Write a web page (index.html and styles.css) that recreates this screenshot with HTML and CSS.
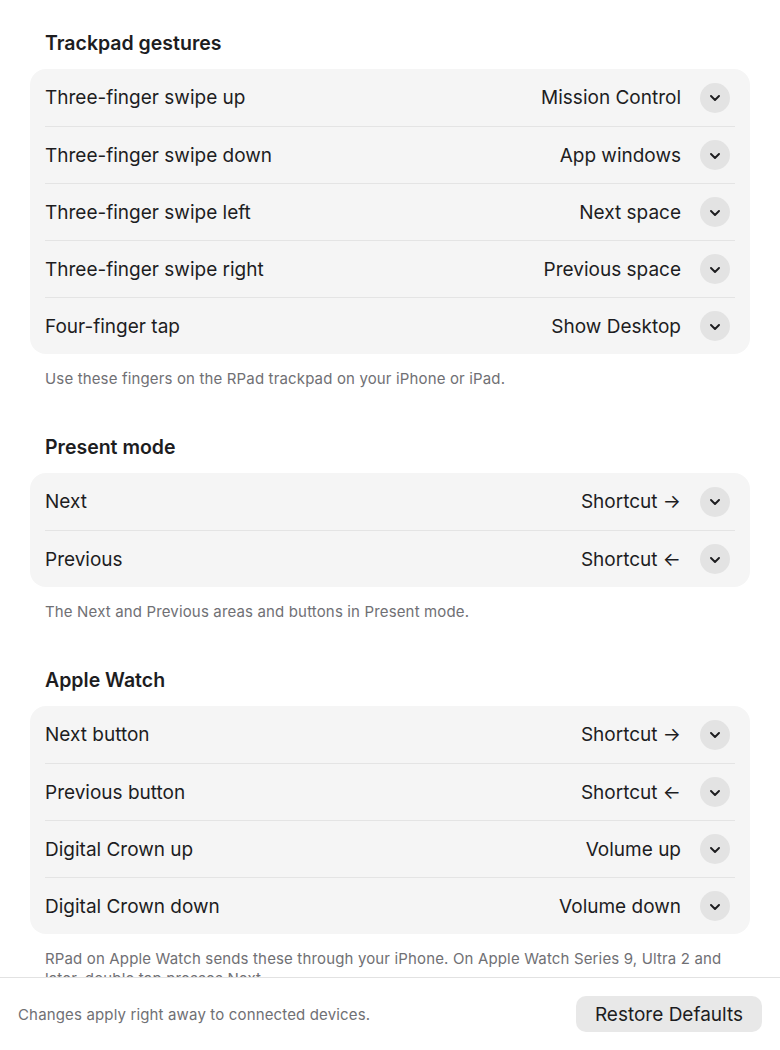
FILE: index.html
```html
<!DOCTYPE html>
<html lang="en">
<head>
<meta charset="utf-8">
<title>RPad settings</title>
<link rel="stylesheet" href="styles.css">
</head>
<body>
<div class="page">
  <main class="scroll">
    <section class="group">
      <h2 class="group-title">Trackpad gestures</h2>
      <div class="card">
        <div class="row"><span class="label">Three-finger swipe up</span><span class="value">Mission Control</span><span class="pop"><svg viewBox="0 0 10 6" width="10" height="6"><path d="M1 1 L5 5 L9 1" fill="none" stroke="#1d1d1f" stroke-width="1.9" stroke-linecap="round" stroke-linejoin="round"/></svg></span></div>
        <div class="row"><span class="label">Three-finger swipe down</span><span class="value">App windows</span><span class="pop"><svg viewBox="0 0 10 6" width="10" height="6"><path d="M1 1 L5 5 L9 1" fill="none" stroke="#1d1d1f" stroke-width="1.9" stroke-linecap="round" stroke-linejoin="round"/></svg></span></div>
        <div class="row"><span class="label">Three-finger swipe left</span><span class="value">Next space</span><span class="pop"><svg viewBox="0 0 10 6" width="10" height="6"><path d="M1 1 L5 5 L9 1" fill="none" stroke="#1d1d1f" stroke-width="1.9" stroke-linecap="round" stroke-linejoin="round"/></svg></span></div>
        <div class="row"><span class="label">Three-finger swipe right</span><span class="value">Previous space</span><span class="pop"><svg viewBox="0 0 10 6" width="10" height="6"><path d="M1 1 L5 5 L9 1" fill="none" stroke="#1d1d1f" stroke-width="1.9" stroke-linecap="round" stroke-linejoin="round"/></svg></span></div>
        <div class="row"><span class="label">Four-finger tap</span><span class="value">Show Desktop</span><span class="pop"><svg viewBox="0 0 10 6" width="10" height="6"><path d="M1 1 L5 5 L9 1" fill="none" stroke="#1d1d1f" stroke-width="1.9" stroke-linecap="round" stroke-linejoin="round"/></svg></span></div>
      </div>
      <p class="caption">Use these fingers on the RPad trackpad on your iPhone or iPad.</p>
    </section>

    <section class="group">
      <h2 class="group-title">Present mode</h2>
      <div class="card">
        <div class="row"><span class="label">Next</span><span class="value">Shortcut →</span><span class="pop"><svg viewBox="0 0 10 6" width="10" height="6"><path d="M1 1 L5 5 L9 1" fill="none" stroke="#1d1d1f" stroke-width="1.9" stroke-linecap="round" stroke-linejoin="round"/></svg></span></div>
        <div class="row"><span class="label">Previous</span><span class="value">Shortcut ←</span><span class="pop"><svg viewBox="0 0 10 6" width="10" height="6"><path d="M1 1 L5 5 L9 1" fill="none" stroke="#1d1d1f" stroke-width="1.9" stroke-linecap="round" stroke-linejoin="round"/></svg></span></div>
      </div>
      <p class="caption">The Next and Previous areas and buttons in Present mode.</p>
    </section>

    <section class="group">
      <h2 class="group-title">Apple Watch</h2>
      <div class="card">
        <div class="row"><span class="label">Next button</span><span class="value">Shortcut →</span><span class="pop"><svg viewBox="0 0 10 6" width="10" height="6"><path d="M1 1 L5 5 L9 1" fill="none" stroke="#1d1d1f" stroke-width="1.9" stroke-linecap="round" stroke-linejoin="round"/></svg></span></div>
        <div class="row"><span class="label">Previous button</span><span class="value">Shortcut ←</span><span class="pop"><svg viewBox="0 0 10 6" width="10" height="6"><path d="M1 1 L5 5 L9 1" fill="none" stroke="#1d1d1f" stroke-width="1.9" stroke-linecap="round" stroke-linejoin="round"/></svg></span></div>
        <div class="row"><span class="label">Digital Crown up</span><span class="value">Volume up</span><span class="pop"><svg viewBox="0 0 10 6" width="10" height="6"><path d="M1 1 L5 5 L9 1" fill="none" stroke="#1d1d1f" stroke-width="1.9" stroke-linecap="round" stroke-linejoin="round"/></svg></span></div>
        <div class="row"><span class="label">Digital Crown down</span><span class="value">Volume down</span><span class="pop"><svg viewBox="0 0 10 6" width="10" height="6"><path d="M1 1 L5 5 L9 1" fill="none" stroke="#1d1d1f" stroke-width="1.9" stroke-linecap="round" stroke-linejoin="round"/></svg></span></div>
      </div>
      <p class="caption">RPad on Apple Watch sends these through your iPhone. On Apple Watch Series 9, Ultra 2 and later, double tap presses Next.</p>
    </section>
  </main>
  <footer class="footer">
    <span class="footer-note">Changes apply right away to connected devices.</span>
    <button class="btn" type="button">Restore Defaults</button>
  </footer>
</div>
</body>
</html>
```

FILE: styles.css
```css
* { box-sizing: border-box; }
html, body {
  margin: 0;
  padding: 0;
  height: 100%;
  background: #ffffff;
}
body {
  font-family: Inter, "Noto Sans", "Liberation Sans", sans-serif;
  color: #1d1d1f;
  -webkit-font-smoothing: antialiased;
}
.page {
  height: 1050px;
  display: flex;
  flex-direction: column;
}
.scroll {
  flex: 1;
  overflow: hidden;
  padding: 31px 30px 0 30px;
}
.group + .group { margin-top: 46px; }
.group-title {
  margin: 0 0 14px 15px;
  font-size: 19.5px;
  line-height: 24px;
  font-weight: 600;
  color: #1d1d1f;
}
.card {
  background: #f5f5f5;
  border-radius: 16px;
}
.row {
  height: 57px;
  display: flex;
  align-items: center;
  margin: 0 15px;
  padding-right: 5px;
  font-size: 19px;
}
.row + .row { border-top: 1px solid #e4e4e4; }
.label { flex: 1; }
.value { margin-right: 19px; }
.pop {
  width: 30px;
  height: 30px;
  border-radius: 50%;
  background: #e3e3e3;
  display: flex;
  align-items: center;
  justify-content: center;
}
.pop svg { display: block; margin-top: 1px; }
.caption {
  margin: 15px 15px 0 15px;
  font-size: 15px;
  line-height: 20px;
  letter-spacing: 0.15px;
  color: #707074;
}
.footer {
  height: 73px;
  border-top: 1px solid #e2e2e2;
  display: flex;
  align-items: center;
  justify-content: space-between;
  padding: 0 18px;
  background: #ffffff;
}
.footer-note {
  font-size: 15px;
  letter-spacing: 0.15px;
  color: #707074;
}
.btn {
  font-family: inherit;
  font-size: 19px;
  color: #1d1d1f;
  background: #e8e8e8;
  border: none;
  border-radius: 10px;
  height: 36px;
  padding: 0 19px;
}
```
